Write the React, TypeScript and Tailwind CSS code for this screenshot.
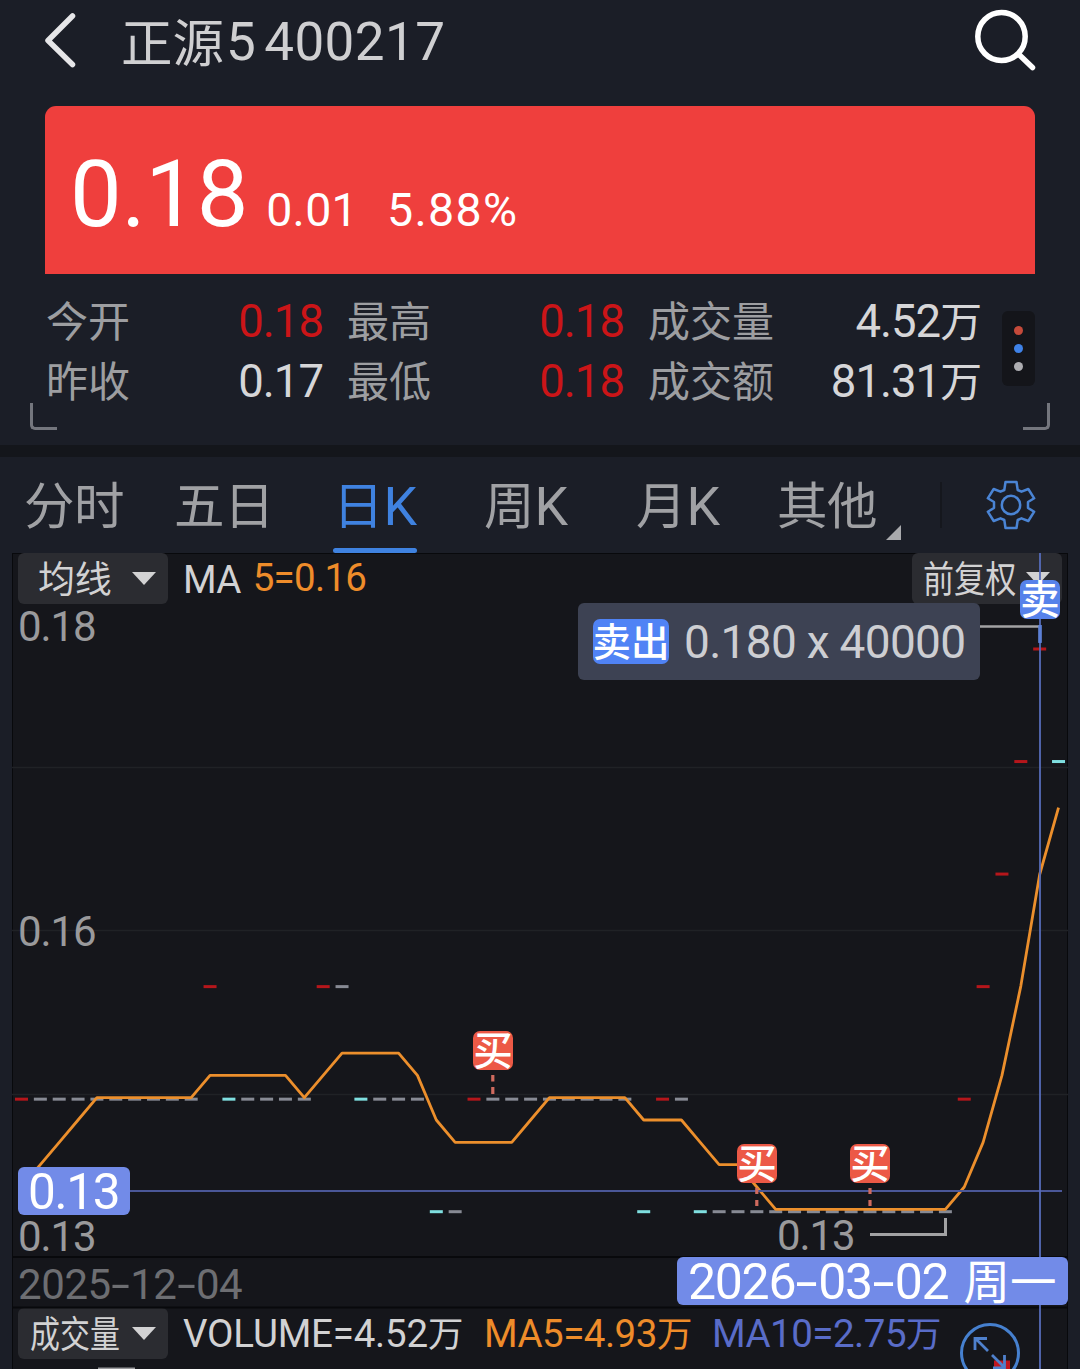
import type { ReactNode } from "react";

// close prices in cents, one entry per trading day
const CLOSES = [
  14, 14, 14, 14, 14, 14, 14, 14, 14, 14, 15, 14, 14, 14, 14, 14, 15, 15, 14,
  14, 14, 14, 13, 13, 14, 14, 14, 14, 14, 14, 14, 14, 14, 13, 14, 14, 13, 13,
  13, 13, 13, 13, 13, 13, 13, 13, 13, 13, 13, 13, 14, 15, 16, 17, 18, 17,
];
const PREVIOUS = [13, 13, 13, 13];
const STEP = 18.855;

const dayX = (i: number) => 21.5 + i * STEP;
const priceY = (p: number) => 1211.7 - (p - 13) * 112.54;
const averageY = (p: number) => 1209.3 - (p - 13) * 111.6;

const all = [...PREVIOUS, ...CLOSES];
const MA5 = CLOSES.map(
  (_, i) => all.slice(i, i + 5).reduce((sum, p) => sum + p, 0) / 5
);

const candleColor = (i: number) => {
  const prev = all[i + 3];
  if (CLOSES[i] > prev) return "#b5161b";
  if (CLOSES[i] < prev) return "#7fdfe0";
  return "#878a94";
};

const STATS = [
  [
    { label: "今开", value: "0.18", color: "text-[#cb1518]" },
    { label: "最高", value: "0.18", color: "text-[#cb1518]" },
    { label: "成交量", value: "4.52", unit: "万", color: "text-[#d6d6d8]" },
  ],
  [
    { label: "昨收", value: "0.17", color: "text-[#d6d6d8]" },
    { label: "最低", value: "0.18", color: "text-[#cb1518]" },
    { label: "成交额", value: "81.31", unit: "万", color: "text-[#d6d6d8]" },
  ],
];

const BUYS = [
  { left: "left-[460px]", top: "top-[477px]" },
  { left: "left-[724px]", top: "top-[590px]" },
  { left: "left-[837px]", top: "top-[590px]" },
];

// Chinese glyphs sit a bit smaller than the digits next to them
const Han = ({ children }: { children: ReactNode }) => (
  <span className="text-[0.92em] tracking-normal">{children}</span>
);

const DateText = ({ value }: { value: string }) => (
  <>
    {value.split("-").map((part, i) => (
      <span key={i}>
        {i > 0 && (
          <span className="inline-block w-[0.46em] scale-x-[1.6] text-center tracking-normal">
            -
          </span>
        )}
        {part}
      </span>
    ))}
  </>
);

const Caret = () => (
  <svg className="h-[13px] w-6 shrink-0" viewBox="0 0 24 13">
    <path d="M0 0h24L12 13z" fill="#d2d2d3" />
  </svg>
);

const Header = () => (
  <header className="flex h-[106px] items-start pl-[44px] pr-[43px]">
    <svg
      className="mt-3 h-[56px] w-8"
      viewBox="0 0 32 56"
      fill="none"
      stroke="#e6e6e8"
      strokeWidth="5.5"
      strokeLinecap="round"
      strokeLinejoin="round"
    >
      <path d="M28.5 4L4 28.5L28.5 52.5" />
    </svg>
    <h1 className="ml-[45px] flex h-[85px] items-center whitespace-pre text-[53px] leading-[85px] tracking-[0.4px] text-[#cfcfd1]">
      <span className="pt-[3px] text-[51.5px] tracking-normal">正源</span>
      <span className="ml-[2px]">5</span>
      <span className="ml-[8px]">400217</span>
    </h1>
    <svg
      className="ml-auto mt-[9px] h-[62px] w-[62px]"
      viewBox="0 0 62 62"
      fill="none"
      stroke="#fff"
      strokeWidth="5.5"
      strokeLinecap="round"
    >
      <ellipse cx="26.500" cy="27.500" rx="23.700" ry="24" />
      <path d="M45 46.500L57.500 58.500" />
    </svg>
  </header>
);

const PriceCard = () => (
  <section className="mx-[45px] flex h-[168px] items-baseline rounded-t-[11px] bg-[#ef3f3d] pl-[25px] text-[46.5px] text-white">
    <span className="text-[92px] leading-[178px] tracking-[-0.3px]">0.18</span>
    <span className="ml-[18px] tracking-[0.3px]">0.01</span>
    <span className="ml-[29px] tracking-[1.300px]">5.88%</span>
  </section>
);

const Stats = () => (
  <section className="relative h-[171px] pl-[46px] pt-[18px]">
    {STATS.map((row, r) => (
      <div
        key={r}
        className="grid h-[60px] grid-cols-[277px_277px_334px] gap-x-6 text-[45.5px] leading-[60px] tracking-[-1px]"
      >
        {row.map((item) => (
          <div key={item.label} className="flex justify-between">
            <span className="text-[42px] leading-[62px] tracking-normal text-[#9d9ea1]">
              {item.label}
            </span>
            <span className={item.color}>
              {item.value}
              {item.unit && <Han>{item.unit}</Han>}
            </span>
          </div>
        ))}
      </div>
    ))}

    {/* More button */}
    <div className="absolute right-[45px] top-[37px] flex h-[75px] w-[33px] flex-col items-center justify-center gap-[9px] rounded-md bg-[#14151a]">
      <span className="h-[9px] w-[9px] rounded-full bg-[#c54a3a]" />
      <span className="h-[9px] w-[9px] rounded-full bg-[#3f82e8]" />
      <span className="h-[9px] w-[9px] rounded-full bg-[#adadb1]" />
    </div>

    <span className="absolute left-[30px] top-[129px] h-[27px] w-[27px] rounded-bl-[5px] border-b-3 border-l-3 border-[#74767d]" />
    <span className="absolute right-[30px] top-[129px] h-[27px] w-[27px] rounded-br-[5px] border-b-3 border-r-3 border-[#74767d]" />
  </section>
);

const Tabs = () => (
  <nav className="flex h-[96px] pl-6 text-[53.5px] leading-[99px] text-[#a0a1a4]">
    <span className="w-[150px] text-[50.5px] tracking-[-0.5px]">分时</span>
    <span className="w-[159px] text-[50.5px] tracking-[-0.5px]">五日</span>
    <span className="relative flex w-[84px] text-[#3f82e0]">
      <span className="text-[50.5px]">日</span>K
      <span className="absolute bottom-0 left-0 h-[5px] w-[84px] rounded-sm bg-[#3f82e0]" />
    </span>
    <span className="ml-[67px] flex w-[152px]">
      <span className="text-[50.5px]">周</span>K
    </span>
    <span className="flex w-[141px]">
      <span className="text-[50.5px]">月</span>K
    </span>
    <span className="text-[50.5px] tracking-[-0.5px]">其他</span>
    <svg className="ml-[9px] mt-[68px] h-[15px] w-[15px]" viewBox="0 0 15 15">
      <path d="M15 0v15H0z" fill="#a9aaad" />
    </svg>
    <span className="ml-[39px] mt-[25px] h-[46px] w-[2px] bg-[#15171d]" />
    <svg
      className="ml-[43px] mt-[22px] h-[52px] w-[52px]"
      viewBox="-26 -26 52 52"
      fill="none"
      stroke="#4a84d4"
      strokeWidth="2.5"
      strokeLinejoin="round"
    >
      <circle r="9.2" />
      <path d="M-5.5 -23H5.5L6.7 -15L10.5 -13.3L17.3 -16L23.2 -6.7L17 -3V3L23.2 6.7L17.3 16L10.5 13.3L6.7 15L5.5 23H-5.5L-6.7 15L-10.5 13.3L-17.3 16L-23.2 6.7L-17 3V-3L-23.2 -6.7L-17.3 -16L-10.5 -13.3L-6.7 -15Z" />
    </svg>
  </nav>
);

const ChartDrawing = () => (
  <svg
    className="absolute -left-px -top-px h-[816px] w-[1056px]"
    viewBox="12 553 1056 816"
    fill="none"
  >
    <path
      d="M12 767.5H1068M12 930.5H1068M12 1094.5H1068"
      stroke="#202226"
      strokeWidth="1.5"
    />
    <path d="M12 1257H1068M12 1307.5H1068" stroke="#08090c" strokeWidth="2" />

    {CLOSES.map((price, i) => (
      <rect
        key={i}
        x={dayX(i) - 6.5}
        y={priceY(price) - 1.5}
        width="13"
        height="3"
        fill={candleColor(i)}
      />
    ))}

    <polyline
      points={MA5.map((p, i) => `${dayX(i)},${averageY(p)}`).join(" ")}
      stroke="#ec8f2c"
      strokeWidth="2.8"
      strokeLinejoin="round"
    />

    {/* high / low pointers */}
    <path d="M980 626.5H1040V642" stroke="#a2a2a4" strokeWidth="2.6" />
    <path d="M870 1234.5H945.5V1218" stroke="#a2a2a4" strokeWidth="3" />

    {/* crosshair */}
    <path d="M130 1191H1062" stroke="#4a5798" strokeWidth="1.8" />
    <path d="M1040 553V1369" stroke="#566cba" strokeWidth="1.8" />
    <path d="M1040 625V643" stroke="#5a7fd8" strokeWidth="3.5" />

    {/* trade stems */}
    <path
      d="M492.8 1075V1081.5M492.8 1087V1094M756.8 1188V1194M756.8 1200V1206M870 1188V1194M870 1200V1206"
      stroke="#cf6a5e"
      strokeWidth="3.2"
    />

    {/* volume bars */}
    <rect x="994" y="1360.5" width="16" height="9" fill="#c2161e" />
    <rect x="98" y="1367.5" width="37" height="2" fill="#9a9a9d" />

    {/* expand button */}
    <circle cx="990" cy="1353" r="28.5" stroke="#4680cf" strokeWidth="3" />
    <path
      d="M975 1350V1338.5H987M976 1339L988 1351M992 1355L1005 1368M1004.5 1355V1368H993"
      stroke="#4f80cc"
      strokeWidth="2.8"
    />
  </svg>
);

const Chart = () => (
  <section className="relative mx-3 h-[816px] border-x border-t border-[#08090c] bg-[#15161b] text-[42px] tracking-[-1.1px] text-[#9a9a9c]">
    {/* Indicator bar */}
    <div className="-mt-px flex h-[51px] pl-[5px] pr-[5px] text-[38.5px] leading-[51px] tracking-[-0.7px]">
      <button className="flex h-[51px] w-[150px] items-center justify-between rounded-md bg-[#2b2c31] pl-5 pr-3 text-[37px] text-[#d2d2d3]">
        <span className="pt-1 tracking-[-0.3px]">均线</span>
        <Caret />
      </button>
      <span className="ml-[15px] leading-[53px] text-[#d2d2d3]">MA</span>
      <span className="ml-[12px] leading-[49px] text-[#ee8c2a]">5=0.16</span>
      <button className="ml-auto flex h-[51px] w-[150px] items-center justify-between rounded-md bg-[#2b2c31] pl-[11px] pr-3 text-[37px] text-[#d2d2d3]">
        <span className="w-[92px] origin-left scale-x-[0.84] whitespace-nowrap pt-1 tracking-normal">
          前复权
        </span>
        <Caret />
      </button>
    </div>

    {/* Price axis */}
    <div className="relative z-10 h-[653px] pt-[2px]">
      <div className="flex h-[652px] flex-col justify-between pl-[5px] leading-[42px]">
        <span>0.18</span>
        <span>0.16</span>
        <span>0.13</span>
      </div>
    </div>

    {/* Dates */}
    <div className="h-[51px] pl-[5px] leading-[55px] tracking-[-0.4px] text-[#6d6e72]">
      <DateText value="2025-12-04" />
    </div>

    {/* Volume indicator */}
    <div className="flex h-[51px] whitespace-nowrap pl-[5px] text-[38.5px] leading-[51px] tracking-[-0.5px]">
      <button className="flex h-[51px] w-[150px] items-center justify-between rounded-md bg-[#2b2c31] pl-3 pr-3 text-[37px] text-[#d2d2d3]">
        <span className="w-[90px] origin-left scale-x-[0.81] pt-1 tracking-normal">
          成交量
        </span>
        <Caret />
      </button>
      <span className="ml-[15px] w-[301px] tracking-[-0.2px] text-[#d2d2d3]">
        VOLUME=4.52<Han>万</Han>
      </span>
      <span className="w-[228px] text-[#ee8c2a]">
        MA5=4.93<Han>万</Han>
      </span>
      <span className="text-[#596cc8]">
        MA10=2.75<Han>万</Han>
      </span>
    </div>

    <ChartDrawing />

    {/* Labels floating over the plot */}
    <span className="absolute left-[764px] top-[661px] leading-[42px]">0.13</span>
    <span className="absolute left-[5px] top-[613px] z-10 h-[48px] w-[112px] rounded-md bg-[#728be8] pl-[10px] text-[49.5px] leading-[50px] tracking-[-1.3px] text-white">
      0.13
    </span>
    <span className="absolute -right-px top-[703px] flex h-[48px] w-[391px] items-center whitespace-nowrap rounded-md bg-[#728be8] pl-[11px] text-[50px] tracking-[-1.3px] text-white">
      <span className="pt-px leading-[48px]">
        <DateText value="2026-03-02" />
      </span>
      <span className="ml-[15px] pt-[3px] text-[46.5px] leading-[48px] tracking-normal">
        周一
      </span>
    </span>

    {BUYS.map((buy) => (
      <span
        key={buy.left}
        className={`absolute ${buy.left} ${buy.top} flex h-[39px] w-[40px] justify-center rounded-[7px] bg-[#ec5946] text-[39.5px] font-medium leading-[41px] tracking-normal text-white`}
      >
        买
      </span>
    ))}
    <span className="absolute left-[1007px] top-[26px] flex h-[39px] w-[40px] justify-center rounded-[7px] bg-[#5682ea] text-[39.5px] font-medium leading-[42px] tracking-normal text-white">
      卖
    </span>

    <div className="absolute left-[565px] top-[49px] flex h-[77px] w-[402px] items-center whitespace-nowrap rounded-md bg-[#3d4253] pl-[15px] text-[46px] tracking-[-0.7px] text-[#cdced2]">
      <span className="flex h-[45px] w-[76px] justify-center rounded-[7px] bg-[#5083f5] text-[38.5px] font-medium leading-[47px] tracking-normal text-white">
        卖出
      </span>
      <span className="ml-[15px] pt-[2px]">0.180 x 40000</span>
    </div>
  </section>
);

export default function App() {
  return (
    <main className="flex h-[1369px] w-[1080px] flex-col overflow-hidden bg-[#1b1e27] font-['Roboto','Noto_Sans_CJK_SC',sans-serif]">
      <Header />
      <PriceCard />
      <Stats />
      <div className="h-3 bg-[#14161b]" />
      <Tabs />
      <Chart />
    </main>
  );
}
